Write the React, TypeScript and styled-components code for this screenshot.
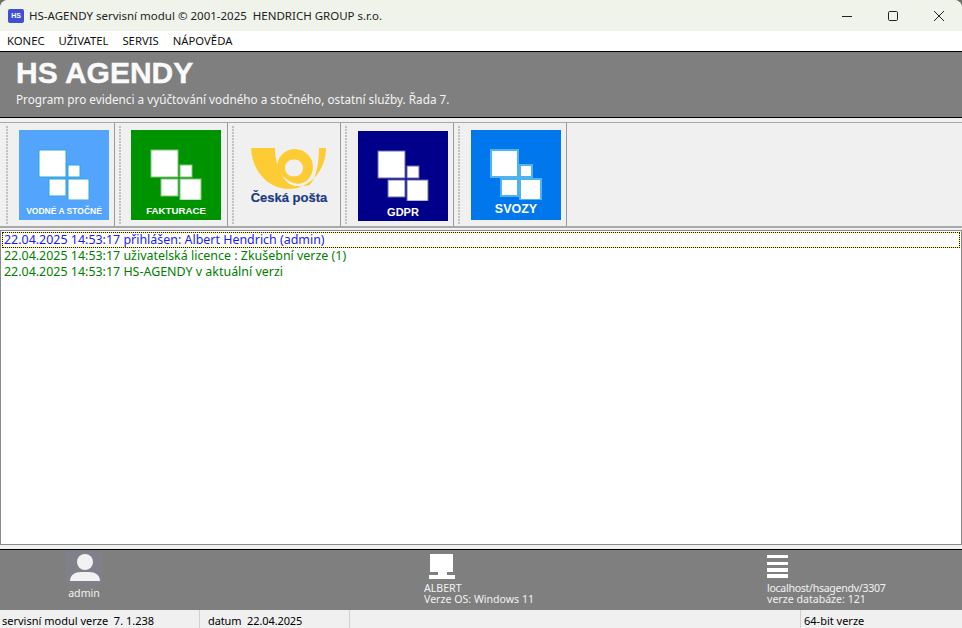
import React from 'react';
import styled, { createGlobalStyle } from 'styled-components';

const GlobalStyle = createGlobalStyle`
  html, body {
    margin: 0;
    padding: 0;
    background: #6f7066;
  }
  * {
    box-sizing: border-box;
  }
`;

const Window = styled.div`
  display: flex;
  flex-direction: column;
  width: 962px;
  height: 628px;
  overflow: hidden;
  border-radius: 8px 8px 0 0;
  background: #f0f0f0;
  color: #000;
  font-family: 'Noto Sans', sans-serif;
  font-size: 12px;
`;

const TitleBar = styled.div`
  display: flex;
  align-items: center;
  height: 31px;
  padding-left: 8px;
  background: #eff3ea;
`;

const AppBadge = styled.div`
  display: flex;
  align-items: center;
  justify-content: center;
  width: 16px;
  height: 14px;
  margin-right: 5px;
  border-radius: 2px;
  background: #3f4fd1;
  color: #fff;
  font-family: 'Liberation Sans', sans-serif;
  font-size: 7px;
  font-weight: 700;
`;

const TitleText = styled.div`
  flex: 1;
  color: #222;
  font-size: 11.5px;
  white-space: pre;
`;

const WindowButton = styled.div`
  display: flex;
  align-items: center;
  justify-content: center;
  width: 46px;
  height: 31px;
`;

const MenuBar = styled.div`
  display: flex;
  align-items: center;
  gap: 14px;
  height: 20px;
  padding-left: 7px;
  background: #fff;
  border-bottom: 1px solid #fff;
`;

const MenuItem = styled.div`
  font-size: 11.3px;
  color: #111;
`;

const Banner = styled.div`
  display: flex;
  flex-direction: column;
  height: 67px;
  padding: 4px 0 0 16px;
  background: #7f7f7f;
  border-top: 1px solid #000;
  border-bottom: 1px solid #000;
  color: #fff;
`;

const BannerTitle = styled.div`
  font-family: 'Liberation Sans', sans-serif;
  font-size: 30px;
  font-weight: 700;
  line-height: 34px;
  color: #fafafa;
  -webkit-text-stroke: 0.4px #fafafa;
`;

const BannerSub = styled.div`
  margin-top: 1px;
  font-size: 11.75px;
  line-height: 16px;
  color: #f4f4f4;
`;

const Toolbar = styled.div`
  display: flex;
  height: 106px;
  margin-top: 4px;
  padding-left: 2px;
  border-top: 1px solid #a8a8a8;
  border-bottom: 2px solid #a8a8a8;
`;

const ToolCell = styled.div`
  position: relative;
  display: flex;
  justify-content: center;
  width: 113px;
  padding: 7px 0 0 12px;
  border-right: 1px solid #9a9a9a;
`;

const Grip = styled.div`
  position: absolute;
  left: 4px;
  top: 3px;
  bottom: 2px;
  width: 2px;
  background-image: linear-gradient(#c2c2c2 2px, transparent 2px);
  background-size: 2px 3px;
`;

const Tile = styled.div<{ $bg: string; $labelSize: number; $nudgeX: number; $nudgeY: number }>`
  display: flex;
  flex-direction: column;
  align-items: center;
  width: 90px;
  height: 90px;
  margin: ${(p) => p.$nudgeY}px ${(p) => -p.$nudgeX}px 0 ${(p) => p.$nudgeX}px;
  background: ${(p) => p.$bg};
  color: #fff;
  font-family: 'Liberation Sans', sans-serif;
  font-size: ${(p) => p.$labelSize}px;
  font-weight: 700;
`;

const TileIcon = styled.svg`
  display: block;
  flex: none;
`;

const TileLabel = styled.div<{ $offset: number }>`
  margin-top: ${(p) => p.$offset}px;
  line-height: 12px;
  white-space: nowrap;
`;

const PostLogo = styled.div`
  display: flex;
  flex-direction: column;
  align-items: center;
  width: 90px;
  padding: 18px 2px 0 0;
`;

const PostName = styled.div`
  color: #1c3a86;
  font-family: 'Liberation Sans', sans-serif;
  font-size: 13px;
  font-weight: 700;
  line-height: 16px;
  white-space: nowrap;
  -webkit-text-stroke: 0.2px #1c3a86;
`;

const Log = styled.div`
  flex: 1;
  margin-top: 2px;
  padding: 1px;
  background: #fff;
  border: 1px solid #8a8a8a;
`;

const LogRow = styled.div<{ $color: string; $focused?: boolean }>`
  height: 16px;
  padding-left: 2px;
  color: ${(p) => p.$color};
  font-size: 12.45px;
  line-height: 16px;
  outline: ${(p) => (p.$focused ? '1px dotted #1f1c00' : 'none')};
  outline-offset: -1px;
  box-shadow: ${(p) => (p.$focused ? 'inset 0 0 0 1px #ffe84a' : 'none')};
`;

const InfoBar = styled.div`
  display: grid;
  grid-template-columns: 424px 343px 1fr;
  height: 61px;
  margin-top: 4px;
  background: #7f7f7f;
  border-top: 1px solid #000;
  color: #f2f2f2;
  font-size: 10.6px;
  line-height: 11px;
`;

const InfoBlock = styled.div`
  display: flex;
  flex-direction: column;
  align-items: flex-start;
`;

const UserBlock = styled(InfoBlock)`
  align-items: center;
  width: 36px;
  margin-left: 66px;
`;

const IconBox = styled.div<{ $hover?: boolean }>`
  display: flex;
  align-items: center;
  justify-content: center;
  width: 36px;
  height: 34px;
  padding-left: 2px;
  background: ${(p) => (p.$hover ? '#80808a' : 'transparent')};
`;

const InfoText = styled.div<{ $tight?: boolean }>`
  white-space: nowrap;
  letter-spacing: ${(p) => (p.$tight ? '-0.3px' : '0')};
`;

const UserName = styled(InfoText)`
  margin-top: 4px;
`;

const StatusBar = styled.div`
  display: grid;
  grid-template-columns: 200px 150px 451px 1fr;
  height: 18px;
  background: #f0f0f0;
  font-size: 11px;
  line-height: 21px;
`;

const StatusCell = styled.div<{ $last?: boolean }>`
  padding-left: ${(p) => (p.$last ? '3px' : '2px')};
  border-right: ${(p) => (p.$last ? 'none' : '1px solid #d0d0d0')};
  white-space: pre;
`;

const DateCell = styled(StatusCell)`
  padding-left: 8px;
  letter-spacing: -0.1px;
`;

function Squares({ edge, weight }: { edge: string; weight: number }) {
  return (
    <TileIcon width="90" height="70" viewBox="0 0 90 70">
      <g fill="#fff" stroke={edge} strokeWidth={weight}>
        <rect x="20" y="20" width="27" height="27" />
        <rect x="49" y="35" width="12" height="12" />
        <rect x="30" y="49" width="17" height="17" />
        <rect x="49" y="49" width="21" height="21" />
      </g>
    </TileIcon>
  );
}

function PostHorn() {
  return (
    <svg width="76" height="42" viewBox="0 0 76 40" preserveAspectRatio="none">
      <path
        fill="#fdcc34"
        d="M0 0H24C24 14 29 27 38 34C44 37 52 37 59 35C66 28 68 12 68 0H75C75 22 58 39 38 39C17 39 1 22 0 0Z"
      />
      <path
        fill="#fdcc34"
        fillRule="evenodd"
        d="M26 16C28 6 36 1 44 1C54 1 62 9 62 18C62 27 55 34 47 34C41 34 35 30 31 26C28 23 26 20 26 16ZM43 11C38 11 34 14 34 19C34 24 38 27 43 27C48 27 52 24 52 19C52 14 48 11 43 11Z"
      />
    </svg>
  );
}

const tiles = [
  { label: 'VODNÉ A STOČNÉ', bg: '#52a4fc', edge: '#2fa6d8', weight: 1, size: 8.5, offset: 5, nudgeX: 0, nudgeY: 0 },
  { label: 'FAKTURACE', bg: '#009300', edge: '#7cc87c', weight: 1, size: 9.7, offset: 5, nudgeX: -1, nudgeY: 0 },
];

const tilesAfter = [
  { label: 'GDPR', bg: '#00008b', edge: '#6a6ab0', weight: 1, size: 11, offset: 5, nudgeX: 0, nudgeY: 1 },
  { label: 'SVOZY', bg: '#0077ed', edge: '#4fb4ee', weight: 2, size: 12.5, offset: 3, nudgeX: 0, nudgeY: 0 },
];

type TileData = (typeof tiles)[number];

function ToolTile({ tile }: { tile: TileData }) {
  return (
    <ToolCell>
      <Grip />
      <Tile $bg={tile.bg} $labelSize={tile.size} $nudgeX={tile.nudgeX} $nudgeY={tile.nudgeY}>
        <Squares edge={tile.edge} weight={tile.weight} />
        <TileLabel $offset={tile.offset}>{tile.label}</TileLabel>
      </Tile>
    </ToolCell>
  );
}

export default function App() {
  return (
    <Window>
      <GlobalStyle />
      <TitleBar>
        <AppBadge>HS</AppBadge>
        <TitleText>HS-AGENDY servisní modul © 2001-2025  HENDRICH GROUP s.r.o.</TitleText>
        <WindowButton>
          <svg width="12" height="12" viewBox="0 0 12 12">
            <path d="M1 6.5H11" stroke="#222" strokeWidth="1" />
          </svg>
        </WindowButton>
        <WindowButton>
          <svg width="12" height="12" viewBox="0 0 12 12">
            <rect x="1.5" y="1.5" width="9" height="9" rx="1.2" fill="none" stroke="#222" />
          </svg>
        </WindowButton>
        <WindowButton>
          <svg width="12" height="12" viewBox="0 0 12 12">
            <path d="M1 1L11 11M11 1L1 11" stroke="#222" strokeWidth="1" />
          </svg>
        </WindowButton>
      </TitleBar>
      <MenuBar>
        <MenuItem>KONEC</MenuItem>
        <MenuItem>UŽIVATEL</MenuItem>
        <MenuItem>SERVIS</MenuItem>
        <MenuItem>NÁPOVĚDA</MenuItem>
      </MenuBar>
      <Banner>
        <BannerTitle>HS AGENDY</BannerTitle>
        <BannerSub>Program pro evidenci a vyúčtování vodného a stočného, ostatní služby. Řada 7.</BannerSub>
      </Banner>
      <Toolbar>
        {tiles.map((t) => (
          <ToolTile key={t.label} tile={t} />
        ))}
        <ToolCell>
          <Grip />
          <PostLogo>
            <PostHorn />
            <PostName>Česká pošta</PostName>
          </PostLogo>
        </ToolCell>
        {tilesAfter.map((t) => (
          <ToolTile key={t.label} tile={t} />
        ))}
      </Toolbar>
      <Log>
        <LogRow $color="#1a1aff" $focused>
          22.04.2025 14:53:17 přihlášen: Albert Hendrich (admin)
        </LogRow>
        <LogRow $color="#008000">22.04.2025 14:53:17 uživatelská licence : Zkušební verze (1)</LogRow>
        <LogRow $color="#008000">22.04.2025 14:53:17 HS-AGENDY v aktuální verzi</LogRow>
      </Log>
      <InfoBar>
        <UserBlock>
          <IconBox $hover>
            <svg width="32" height="30" viewBox="0 0 32 30">
              <circle cx="16" cy="10" r="8" fill="#f2f2f2" />
              <path d="M1 29C1 23 6 20 12 20H20C26 20 31 23 31 29Z" fill="#f2f2f2" />
            </svg>
          </IconBox>
          <UserName>admin</UserName>
        </UserBlock>
        <InfoBlock>
          <svg width="32" height="33" viewBox="0 0 32 33">
            <path fill="#fff" d="M6 4H29V22H23V25H31V29H5V25H14V22H6Z" />
          </svg>
          <InfoText>ALBERT</InfoText>
          <InfoText>Verze OS: Windows 11</InfoText>
        </InfoBlock>
        <InfoBlock>
          <svg width="22" height="33" viewBox="0 0 22 33">
            <path fill="#fff" d="M0 5H21V8H0ZM0 12H21V15H0ZM0 18H21V22H0ZM0 24H21V28H0Z" />
          </svg>
          <InfoText $tight>localhost/hsagendv/3307</InfoText>
          <InfoText>verze databáze: 121</InfoText>
        </InfoBlock>
      </InfoBar>
      <StatusBar>
        <StatusCell>servisní modul verze  7. 1.238</StatusCell>
        <DateCell>datum  22.04.2025</DateCell>
        <StatusCell />
        <StatusCell $last>64-bit verze</StatusCell>
      </StatusBar>
    </Window>
  );
}
